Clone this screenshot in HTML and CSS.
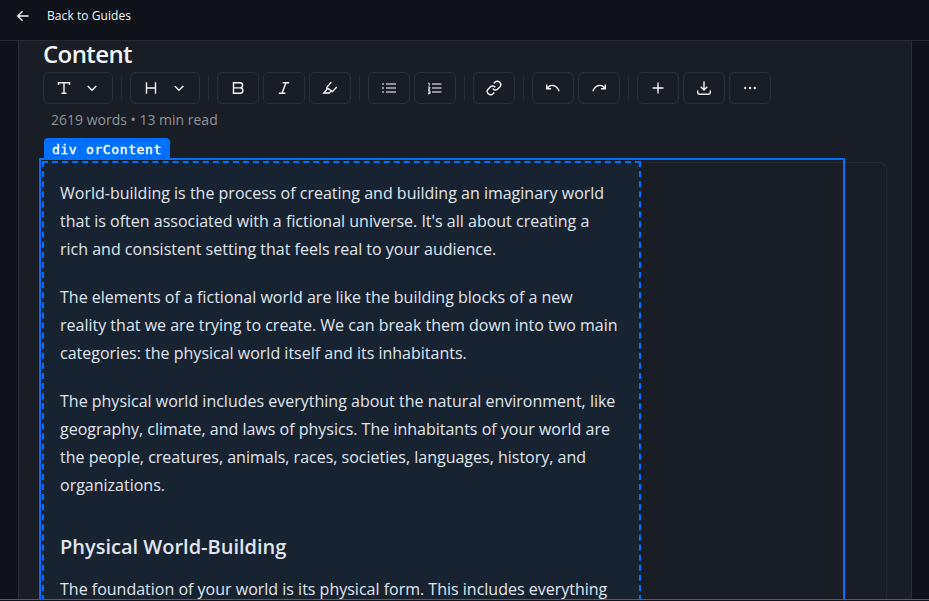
FILE: index.html
```html
<!DOCTYPE html>
<html lang="en">
<head>
<meta charset="utf-8">
<title>Guide editor</title>
<link rel="stylesheet" href="styles.css">
</head>
<body>
<header class="topbar">
  <svg class="back-icon" viewBox="0 0 16 16"><path d="M13.5 8H3M7.5 3.3 2.8 8l4.7 4.7"/></svg>
  <a class="back-label">Back to Guides</a>
</header>
<main class="card">
  <h1 class="title">Content</h1>
  <div class="toolbar">
    <button class="btn wide"><svg viewBox="0 0 16 16"><path d="M2.5 5V2.7h11V5M8 2.7v10.6M5.5 13.3h5"/></svg><svg viewBox="0 0 16 16"><path d="m3.7 6 4.3 4.2L12.3 6"/></svg></button>
    <i class="sep"></i>
    <button class="btn wide"><svg viewBox="0 0 16 16"><path d="M3.5 2.3v11.4M12.5 2.3v11.4M3.5 8h9"/></svg><svg viewBox="0 0 16 16"><path d="m3.7 6 4.3 4.2L12.3 6"/></svg></button>
    <i class="sep"></i>
    <button class="btn"><svg viewBox="0 0 16 16"><path d="M3.5 2.7H10a2.6 2.6 0 0 1 0 5.2H3.5zM3.5 7.9h6.7a2.7 2.7 0 0 1 0 5.4H3.5z"/></svg></button>
    <button class="btn"><svg viewBox="0 0 16 16"><path d="M6.7 2.7h6.5M2.8 13.3h6.5M10 2.7 6 13.3"/></svg></button>
    <button class="btn"><svg viewBox="0 0 16 16"><path d="M9.3 2.3 4.8 7.4v2L1.8 13h5.4l1.4-1.5h2L14.7 7M4.8 7.6l5.4 3.8"/></svg></button>
    <i class="sep"></i>
    <button class="btn"><svg class="list" viewBox="0 0 16 16"><path d="M1 4h2M5 4h10M1 8h2M5 8h10M1 12h2M5 12h10"/></svg></button>
    <button class="btn"><svg class="numbered" viewBox="0 0 16 16"><path class="bars" d="M5 4h9.5M5 8h9.5M5 12h9.5"/><path class="digits" d="M1.2 3.2h1v2.5M1 7.1h1.9v1L1.2 9.2h1.9M1 10.8h2v2.9H1M1.3 12.2H3"/></svg></button>
    <i class="sep"></i>
    <button class="btn"><svg viewBox="0 0 16 16"><path d="M6.7 8.7a3.3 3.3 0 0 0 5 .4l2-2a3.35 3.35 0 0 0-4.8-4.8L7.7 3.5M9.3 7.3a3.3 3.3 0 0 0-5-.4l-2 2a3.35 3.35 0 0 0 4.8 4.8l1.2-1.2"/></svg></button>
    <i class="sep"></i>
    <button class="btn"><svg viewBox="0 0 16 16"><path d="M1.7 4.6v4.2h4.4M2 8.4c3-4.4 9.4-4.4 12.1 2.8"/></svg></button>
    <button class="btn"><svg viewBox="0 0 16 16"><path d="M14.3 4.6v4.2H9.9M14 8.4C11 4 4.6 4 1.9 11.2"/></svg></button>
    <i class="sep"></i>
    <button class="btn"><svg viewBox="0 0 16 16"><path d="M8 2.5v11M2.5 8h11"/></svg></button>
    <button class="btn"><svg viewBox="0 0 16 16"><path d="M8 1.5v8.3M4.7 6.7 8 10l3.3-3.3M1.7 10.5v2.1A1.6 1.6 0 0 0 3.3 14.2h9.4a1.6 1.6 0 0 0 1.6-1.6v-2.1"/></svg></button>
    <button class="btn"><svg class="dots" viewBox="0 0 16 16"><circle cx="3.2" cy="8" r="1.2"/><circle cx="8" cy="8" r="1.2"/><circle cx="12.8" cy="8" r="1.2"/></svg></button>
  </div>
  <p class="meta">2619 words • 13 min read</p>
  <section class="editor">
    <div class="selection"></div>
    <div class="tag"><span class="tag-name">div</span><span>orContent</span></div>
    <article class="prose">
      <p>World-building is the process of creating and building an imaginary world<br>that is often associated with a fictional universe. It's all about creating a<br>rich and consistent setting that feels real to your audience.</p>
      <p>The elements of a fictional world are like the building blocks of a new<br>reality that we are trying to create. We can break them down into two main<br>categories: the physical world itself and its inhabitants.</p>
      <p>The physical world includes everything about the natural environment, like<br>geography, climate, and laws of physics. The inhabitants of your world are<br>the people, creatures, animals, races, societies, languages, history, and<br>organizations.</p>
      <h2>Physical World-Building</h2>
      <p>The foundation of your world is its physical form. This includes everything</p>
    </article>
  </section>
</main>
<div class="edge"></div>
</body>
</html>
```
FILE: styles.css
```css
* { box-sizing: border-box; }
html, body { height: 100%; }
body {
  margin: 0;
  overflow: hidden;
  background: #0f1219;
  color: #f3f4f6;
  font-family: "Open Sans", sans-serif;
}
svg {
  width: 16px;
  height: 16px;
  fill: none;
  stroke: currentColor;
  stroke-width: 1.4;
}
.topbar {
  display: flex;
  align-items: center;
  height: 41px;
  padding: 0 15px 9px;
  border-bottom: 1px solid #272a35;
}
.back-icon { margin-right: 16px; }
.back-label { font-size: 12px; letter-spacing: 0.07px; line-height: 18px; }
.card {
  width: 894px;
  height: 560px;
  margin-left: 18px;
  padding: 0 24px;
  background: #191d25;
  border: solid #2b2e39;
  border-width: 0 1px;
}
.title {
  margin: 0;
  height: 31px;
  font-size: 24px;
  font-weight: 600;
  letter-spacing: -0.6px;
  line-height: 26px;
}
.toolbar { display: flex; align-items: center; gap: 4px; }
.btn {
  display: flex;
  align-items: center;
  justify-content: center;
  width: 42px;
  height: 32px;
  padding: 0;
  color: #f3f4f6;
  background: transparent;
  border: 1px solid #2c2f38;
  border-radius: 6px;
}
.wide { width: 70px; gap: 12px; }
.sep { width: 1px; height: 24px; margin: 0 4px; background: #252a37; }
.list { color: #b5b9bc; }
.numbered .bars { stroke: #b5b9bc; }
.numbered .digits { stroke-width: 1; }
.dots { fill: currentColor; stroke: none; }
.meta {
  margin: 6px 0 0 8px;
  height: 52px;
  color: #91949a;
  font-size: 14px;
  line-height: 20px;
}
.editor {
  position: relative;
  width: 844px;
  height: 439px;
  border: 1px solid #242833;
  border-bottom: 0;
  border-radius: 8px 8px 0 0;
}
.selection {
  position: absolute;
  top: -5px;
  left: -5px;
  width: 806px;
  height: 443px;
  border: 2px solid #0070ff;
  border-bottom: 0;
}
.tag {
  position: absolute;
  top: -25px;
  left: 0;
  display: flex;
  width: 126px;
  height: 22px;
  color: #fff;
  background: #0070ff;
  border-radius: 4px 4px 0 0;
  font: 13px/23px "DejaVu Sans Mono", monospace;
  letter-spacing: 0.6px;
  -webkit-text-stroke: 0.4px #fff;
}
.tag-name { width: 42px; padding-left: 8px; border-right: 1px solid #0069ef; }
.prose {
  width: 599px;
  height: 440px;
  margin: -2px 0 0 -2px;
  padding: 16px 16px 0;
  background: #182332;
  background-clip: padding-box;
  border: 2px dashed #0070ff;
  border-bottom: 0;
  color: #e0e6ee;
  font-size: 16px;
  line-height: 28px;
}
.prose p { margin: 0 0 20px; white-space: nowrap; }
.prose p:last-child { margin-bottom: 0; height: 22px; }
.prose h2 { margin: 34px 0 14px; font-size: 20px; font-weight: 600; line-height: 28px; }
.edge {
  position: absolute;
  left: 0;
  right: 0;
  top: 599px;
  height: 2px;
  background: #11131a;
  border-top: 1px solid #8132d9;
}
```
